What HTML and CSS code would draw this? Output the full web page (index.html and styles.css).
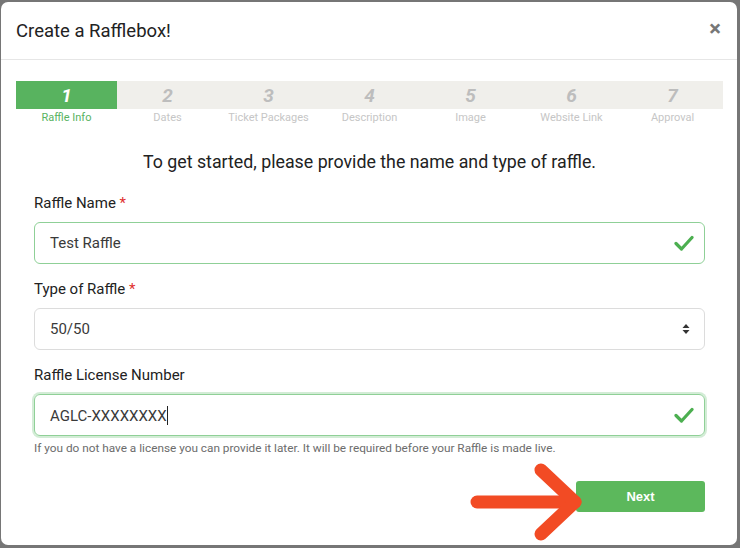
FILE: index.html
```html
<!DOCTYPE html>
<html>
<head>
<meta charset="utf-8">
<link rel="stylesheet" href="styles.css">
</head>
<body>
<div class="modal">
  <div class="modal-header">
    <div class="title">Create a Rafflebox!</div>
    <div class="close">&times;</div>
  </div>
  <div class="modal-body">
    <div class="steps">
      <div class="step active"><div class="num">1</div><div class="lbl">Raffle Info</div></div>
      <div class="step"><div class="num">2</div><div class="lbl">Dates</div></div>
      <div class="step"><div class="num">3</div><div class="lbl">Ticket Packages</div></div>
      <div class="step"><div class="num">4</div><div class="lbl">Description</div></div>
      <div class="step"><div class="num">5</div><div class="lbl">Image</div></div>
      <div class="step"><div class="num">6</div><div class="lbl">Website Link</div></div>
      <div class="step"><div class="num">7</div><div class="lbl">Approval</div></div>
    </div>
    <div class="form">
      <div class="lead">To get started, please provide the name and type of raffle.</div>
      <div class="group">
        <div class="label">Raffle Name <span class="req">*</span></div>
        <div class="field valid">
          <span class="val">Test Raffle</span>
          <svg class="check" width="20" height="16" viewBox="0 0 20 16"><path d="M2 8.5 L7.5 14 L18 2.5" fill="none" stroke="#4caf50" stroke-width="3.2" stroke-linecap="round" stroke-linejoin="round"/></svg>
        </div>
      </div>
      <div class="group">
        <div class="label">Type of Raffle <span class="req">*</span></div>
        <div class="field">
          <span class="val">50/50</span>
          <svg class="sel" width="8" height="12" viewBox="0 0 8 12"><path d="M4 1 L7.5 5 H0.5 Z M4 11 L7.5 7 H0.5 Z" fill="#333"/></svg>
        </div>
      </div>
      <div class="group">
        <div class="label">Raffle License Number</div>
        <div class="field valid focus">
          <span class="val">AGLC-XXXXXXXX<span class="caret"></span></span>
          <svg class="check" width="20" height="16" viewBox="0 0 20 16"><path d="M2 8.5 L7.5 14 L18 2.5" fill="none" stroke="#4caf50" stroke-width="3.2" stroke-linecap="round" stroke-linejoin="round"/></svg>
        </div>
        <div class="help">If you do not have a license you can provide it later. It will be required before your Raffle is made live.</div>
      </div>
      <div class="actions">
        <button class="btn">Next</button>
      </div>
    </div>
  </div>
  <svg class="arrow" width="140" height="90" viewBox="0 0 140 90"><g fill="none" stroke="#f24b24" stroke-width="13" stroke-linecap="round" stroke-linejoin="round"><path d="M8 45 H106"/><path d="M72 13 L106 45 L72 77"/></g></svg>
</div>
</body>
</html>
```
FILE: styles.css
```css
html, body {
  margin: 0;
  padding: 0;
}
body {
  width: 740px;
  height: 548px;
  overflow: hidden;
  background: #767676;
  font-family: Roboto, "Liberation Sans", sans-serif;
}
.modal {
  position: relative;
  width: 736px;
  height: 543px;
  margin: 2px 0 0 1px;
  background: #fff;
  border-radius: 7px;
  overflow: hidden;
}
.modal-header {
  height: 57px;
  border-bottom: 1px solid #e6e6e6;
  display: flex;
  align-items: center;
  justify-content: space-between;
  padding: 0 15px 0 15px;
}
.title {
  font-size: 18.5px;
  color: #222;
  margin-top: 1px;
}
.close {
  font-size: 22px;
  color: #777;
  font-weight: bold;
  margin-right: 1px;
  margin-top: -4px;
}
.modal-body {
  padding: 21px 14px 0 15px;
}
.steps {
  display: grid;
  grid-template-columns: repeat(7, 101px);
}
.num {
  height: 28px;
  line-height: 29px;
  background: #f0efeb;
  text-align: center;
  font-size: 19px;
  font-weight: bold;
  font-style: italic;
  color: #bdbdbd;
}
.lbl {
  text-align: center;
  font-size: 11px;
  line-height: 14px;
  margin-top: 2px;
  color: #c6c6c6;
}
.step.active .num {
  background: #58b35f;
  color: #fff;
}
.step.active .lbl {
  color: #58b35f;
}
.form {
  padding: 0 18px;
}
.lead {
  text-align: center;
  font-size: 17.8px;
  line-height: 20px;
  color: #222;
  margin-top: 27px;
  margin-bottom: 21px;
}
.group {
  margin-bottom: 15px;
}
.label {
  font-size: 15px;
  line-height: 20px;
  color: #222;
  margin-bottom: 9px;
}
.req {
  color: #e0302e;
}
.field {
  height: 40px;
  border: 1px solid #dcdcdc;
  border-radius: 6px;
  display: flex;
  align-items: center;
  justify-content: space-between;
  padding: 0 10px 0 15px;
}
.field.valid {
  border-color: #8fd097;
}
.field.focus {
  box-shadow: 0 0 0 2px #d3ecd6;
}
.val {
  font-size: 15px;
  color: #3a3a3a;
}
.caret {
  display: inline-block;
  width: 1px;
  height: 19px;
  background: #222;
  vertical-align: -4px;
}
.sel {
  margin-right: 4px;
}
.help {
  font-size: 11.8px;
  line-height: 16px;
  color: #6c6c6c;
  margin-top: 4px;
}
.actions {
  display: flex;
  justify-content: flex-end;
  margin-top: 25px;
}
.btn {
  width: 129px;
  height: 31px;
  border: none;
  border-radius: 3px;
  background: #5cb85c;
  color: #fff;
  font-family: "Liberation Sans", Arial, sans-serif;
  font-weight: bold;
  font-size: 13px;
}
.arrow {
  position: absolute;
  left: 468px;
  top: 455px;
}
```
